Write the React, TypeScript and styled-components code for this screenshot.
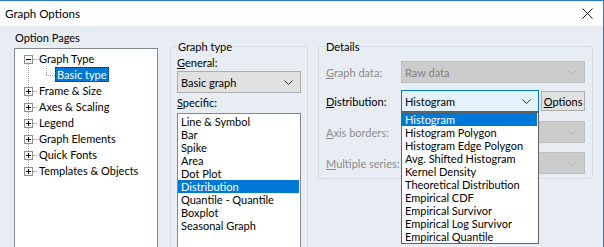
import React from 'react'
import styled, { createGlobalStyle } from 'styled-components'

const BLUE = '#0078d7'

const GlobalStyle = createGlobalStyle`
  body {
    margin: 0;
    font-family: Lato, 'Liberation Sans', sans-serif;
    font-size: 11px;
    color: #000;
  }
`

const Window = styled.div`
  width: 604px;
  height: 247px;
  box-sizing: border-box;
  overflow: hidden;
  border-top: 1px solid #2b79cc;
  border-right: 1px solid #2b79cc;
  background: #e8ecf3;
  display: flex;
  flex-direction: column;
  font-family: Lato, 'Liberation Sans', sans-serif;
`

const TitleBar = styled.div`
  height: 25px;
  flex-shrink: 0;
  background: #fff;
  display: flex;
  align-items: center;
  justify-content: space-between;
  padding: 0 10px 0 5px;
`

const Title = styled.span`
  font-size: 11.6px;
`

const Body = styled.div`
  display: flex;
  align-items: flex-start;
  padding-left: 14px;
`

const LeftPane = styled.div`
  width: 144px;
  display: flex;
  flex-direction: column;
`

const PaneLabel = styled.div`
  line-height: 15px;
  margin-top: 4px;
  padding-left: 1px;
`

const Tree = styled.div`
  margin-top: 3px;
  height: 220px;
  border: 1px solid #828790;
  background: #fff;
  position: relative;
  &::before {
    content: '';
    position: absolute;
    left: 13px;
    top: 10px;
    height: 116px;
    border-left: 1px dotted #a0a0a0;
  }
`

const TreeRow = styled.div<{ $child?: boolean }>`
  height: 16px;
  display: flex;
  align-items: flex-start;
  padding-left: ${(p) => (p.$child ? '31px' : '9px')};
  position: relative;
`

const Twisty = styled.span`
  width: 9px;
  height: 9px;
  margin-top: 6px;
  box-sizing: border-box;
  border: 1px solid #919191;
  background: #fff;
  display: flex;
  align-items: center;
  justify-content: center;
  position: relative;
  z-index: 1;
`

const Connector = styled.span<{ $w: number }>`
  width: ${(p) => p.$w}px;
  margin-top: 10px;
  height: 0;
  border-top: 1px dotted #a0a0a0;
`

const ChildStem = styled.span`
  position: absolute;
  left: 31px;
  top: 1px;
  height: 9px;
  border-left: 1px dotted #a0a0a0;
`

const TreeText = styled.span<{ $selected?: boolean }>`
  line-height: 13px;
  margin-top: 2px;
  padding: 0 1px;
  border: 1px ${(p) => (p.$selected ? 'dotted #222' : 'solid transparent')};
  background: ${(p) => (p.$selected ? BLUE : 'transparent')};
  color: ${(p) => (p.$selected ? '#fff' : '#000')};
  white-space: nowrap;
`

const GroupBox = styled.fieldset<{ $w: number; $pad: number; $h?: number }>`
  box-sizing: border-box;
  width: ${(p) => p.$w}px;
  ${(p) => (p.$h ? `height: ${p.$h}px;` : '')}
  min-width: 0;
  margin: 13px 0 0 0;
  padding: 1px ${(p) => p.$pad}px 4px ${(p) => p.$pad}px;
  border: 1px solid #d4dbe5;
  border-radius: 3px;
`

const Legend = styled.legend<{ $pad: number }>`
  padding: 0 ${(p) => p.$pad}px;
  line-height: 15px;
`

const GraphTypeBox = styled(GroupBox)`
  margin-left: 12px;
`

const DetailsBox = styled(GroupBox)`
  margin-left: 10px;
`

const FieldLabel = styled.div<{ $gap?: number }>`
  line-height: 15px;
  margin-top: ${(p) => p.$gap ?? 0}px;
`

const Combo = styled.div<{ $state?: 'normal' | 'focus' | 'disabled'; $w?: number }>`
  box-sizing: border-box;
  height: 22px;
  ${(p) => (p.$w ? `width: ${p.$w}px;` : 'flex: 1;')}
  display: flex;
  align-items: center;
  justify-content: space-between;
  padding: 0 7px 0 3px;
  border: 1px solid
    ${(p) => (p.$state === 'focus' ? BLUE : p.$state === 'disabled' ? '#bfbfbf' : '#adadad')};
  background: ${(p) =>
    p.$state === 'focus' ? '#e5f1fb' : p.$state === 'disabled' ? '#cccccc' : '#e1e1e1'};
  color: ${(p) => (p.$state === 'disabled' ? '#838383' : '#000')};
  position: relative;
  white-space: nowrap;
`

const ListBox = styled.div`
  margin-top: 3px;
  height: 200px;
  padding-top: 1px;
  border: 1px solid #828790;
  background: #fff;
`

const ListItem = styled.div<{ $selected?: boolean }>`
  line-height: 13px;
  height: 13px;
  padding-left: 3px;
  margin-right: 1px;
  background: ${(p) => (p.$selected ? BLUE : 'transparent')};
  color: ${(p) => (p.$selected ? '#fff' : '#000')};
  white-space: nowrap;
`

const DetailRows = styled.div`
  margin-top: 6px;
`

const DetailRow = styled.div<{ $gap: number }>`
  display: flex;
  align-items: center;
  height: 22px;
  margin-top: ${(p) => p.$gap}px;
`

const RowLabel = styled.span<{ $disabled?: boolean }>`
  width: 75px;
  flex-shrink: 0;
  color: ${(p) => (p.$disabled ? '#8d8d8d' : '#000')};
  white-space: nowrap;
`

const Button = styled.div`
  box-sizing: border-box;
  width: 44px;
  height: 20px;
  margin-left: 2px;
  border: 1px solid #adadad;
  background: #e1e1e1;
  display: flex;
  align-items: center;
  justify-content: center;
`

const DropList = styled.div`
  position: absolute;
  left: -1px;
  right: -1px;
  top: 21px;
  box-sizing: border-box;
  height: 132px;
  border: 1px solid #646464;
  background: #fff;
  z-index: 5;
`

const Chevron = ({ color = '#333' }: { color?: string }) => (
  <svg width="9" height="5" viewBox="0 0 9 5">
    <path d="M0.5 0.5 L4.5 4.5 L8.5 0.5" fill="none" stroke={color} strokeWidth="1" />
  </svg>
)

const Sign = ({ plus }: { plus?: boolean }) => (
  <svg width="7" height="7" viewBox="0 0 7 7">
    <path d="M1 3.5 H6" stroke="#000" strokeWidth="1" />
    {plus && <path d="M3.5 1 V6" stroke="#000" strokeWidth="1" />}
  </svg>
)

const treeItems = [
  'Frame & Size',
  'Axes & Scaling',
  'Legend',
  'Graph Elements',
  'Quick Fonts',
  'Templates & Objects',
]

const specific = [
  'Line & Symbol',
  'Bar',
  'Spike',
  'Area',
  'Dot Plot',
  'Distribution',
  'Quantile - Quantile',
  'Boxplot',
  'Seasonal Graph',
]

const distributions = [
  'Histogram',
  'Histogram Polygon',
  'Histogram Edge Polygon',
  'Avg. Shifted Histogram',
  'Kernel Density',
  'Theoretical Distribution',
  'Empirical CDF',
  'Empirical Survivor',
  'Empirical Log Survivor',
  'Empirical Quantile',
]

export default function App() {
  return (
    <>
      <GlobalStyle />
      <Window>
        <TitleBar>
          <Title>Graph Options</Title>
          <svg width="11" height="11" viewBox="0 0 11 11">
            <path d="M0.5 0.5 L10.5 10.5 M10.5 0.5 L0.5 10.5" stroke="#111" strokeWidth="1" />
          </svg>
        </TitleBar>
        <Body>
          <LeftPane>
            <PaneLabel>Option Pages</PaneLabel>
            <Tree>
              <TreeRow>
                <Twisty>
                  <Sign />
                </Twisty>
                <Connector $w={4} />
                <TreeText>Graph Type</TreeText>
              </TreeRow>
              <TreeRow $child>
                <ChildStem />
                <Connector $w={9} />
                <TreeText $selected>Basic type</TreeText>
              </TreeRow>
              {treeItems.map((t) => (
                <TreeRow key={t}>
                  <Twisty>
                    <Sign plus />
                  </Twisty>
                  <Connector $w={4} />
                  <TreeText>{t}</TreeText>
                </TreeRow>
              ))}
            </Tree>
          </LeftPane>

          <GraphTypeBox $w={138} $pad={6} $h={300}>
            <Legend $pad={1}>Graph type</Legend>
            <FieldLabel>
              <u>G</u>eneral:
            </FieldLabel>
            <FieldLabel $gap={1}>
              <Combo>
                <span>Basic graph</span>
                <Chevron />
              </Combo>
            </FieldLabel>
            <FieldLabel $gap={2}>
              <u>S</u>pecific:
            </FieldLabel>
            <ListBox>
              {specific.map((s) => (
                <ListItem key={s} $selected={s === 'Distribution'}>
                  {s}
                </ListItem>
              ))}
            </ListBox>
          </GraphTypeBox>

          <DetailsBox $w={275} $pad={7}>
            <Legend $pad={0}>Details</Legend>
            <DetailRows>
              <DetailRow $gap={0}>
                <RowLabel $disabled>
                  <u>G</u>raph data:
                </RowLabel>
                <Combo $state="disabled">
                  <span>Raw data</span>
                  <Chevron color="#b0b0b0" />
                </Combo>
              </DetailRow>
              <DetailRow $gap={7}>
                <RowLabel>
                  <u>D</u>istribution:
                </RowLabel>
                <Combo $state="focus" $w={139}>
                  <span>Histogram</span>
                  <Chevron />
                  <DropList>
                    {distributions.map((d, i) => (
                      <ListItem key={d} $selected={i === 0}>
                        {d}
                      </ListItem>
                    ))}
                  </DropList>
                </Combo>
                <Button>
                  <span>
                    <u>O</u>ptions
                  </span>
                </Button>
              </DetailRow>
              <DetailRow $gap={9}>
                <RowLabel $disabled>
                  <u>A</u>xis borders:
                </RowLabel>
                <Combo $state="disabled">
                  <span />
                  <Chevron color="#b0b0b0" />
                </Combo>
              </DetailRow>
              <DetailRow $gap={9}>
                <RowLabel $disabled>
                  <u>M</u>ultiple series:
                </RowLabel>
                <Combo $state="disabled">
                  <span />
                  <Chevron color="#b0b0b0" />
                </Combo>
              </DetailRow>
            </DetailRows>
          </DetailsBox>
        </Body>
      </Window>
    </>
  )
}
